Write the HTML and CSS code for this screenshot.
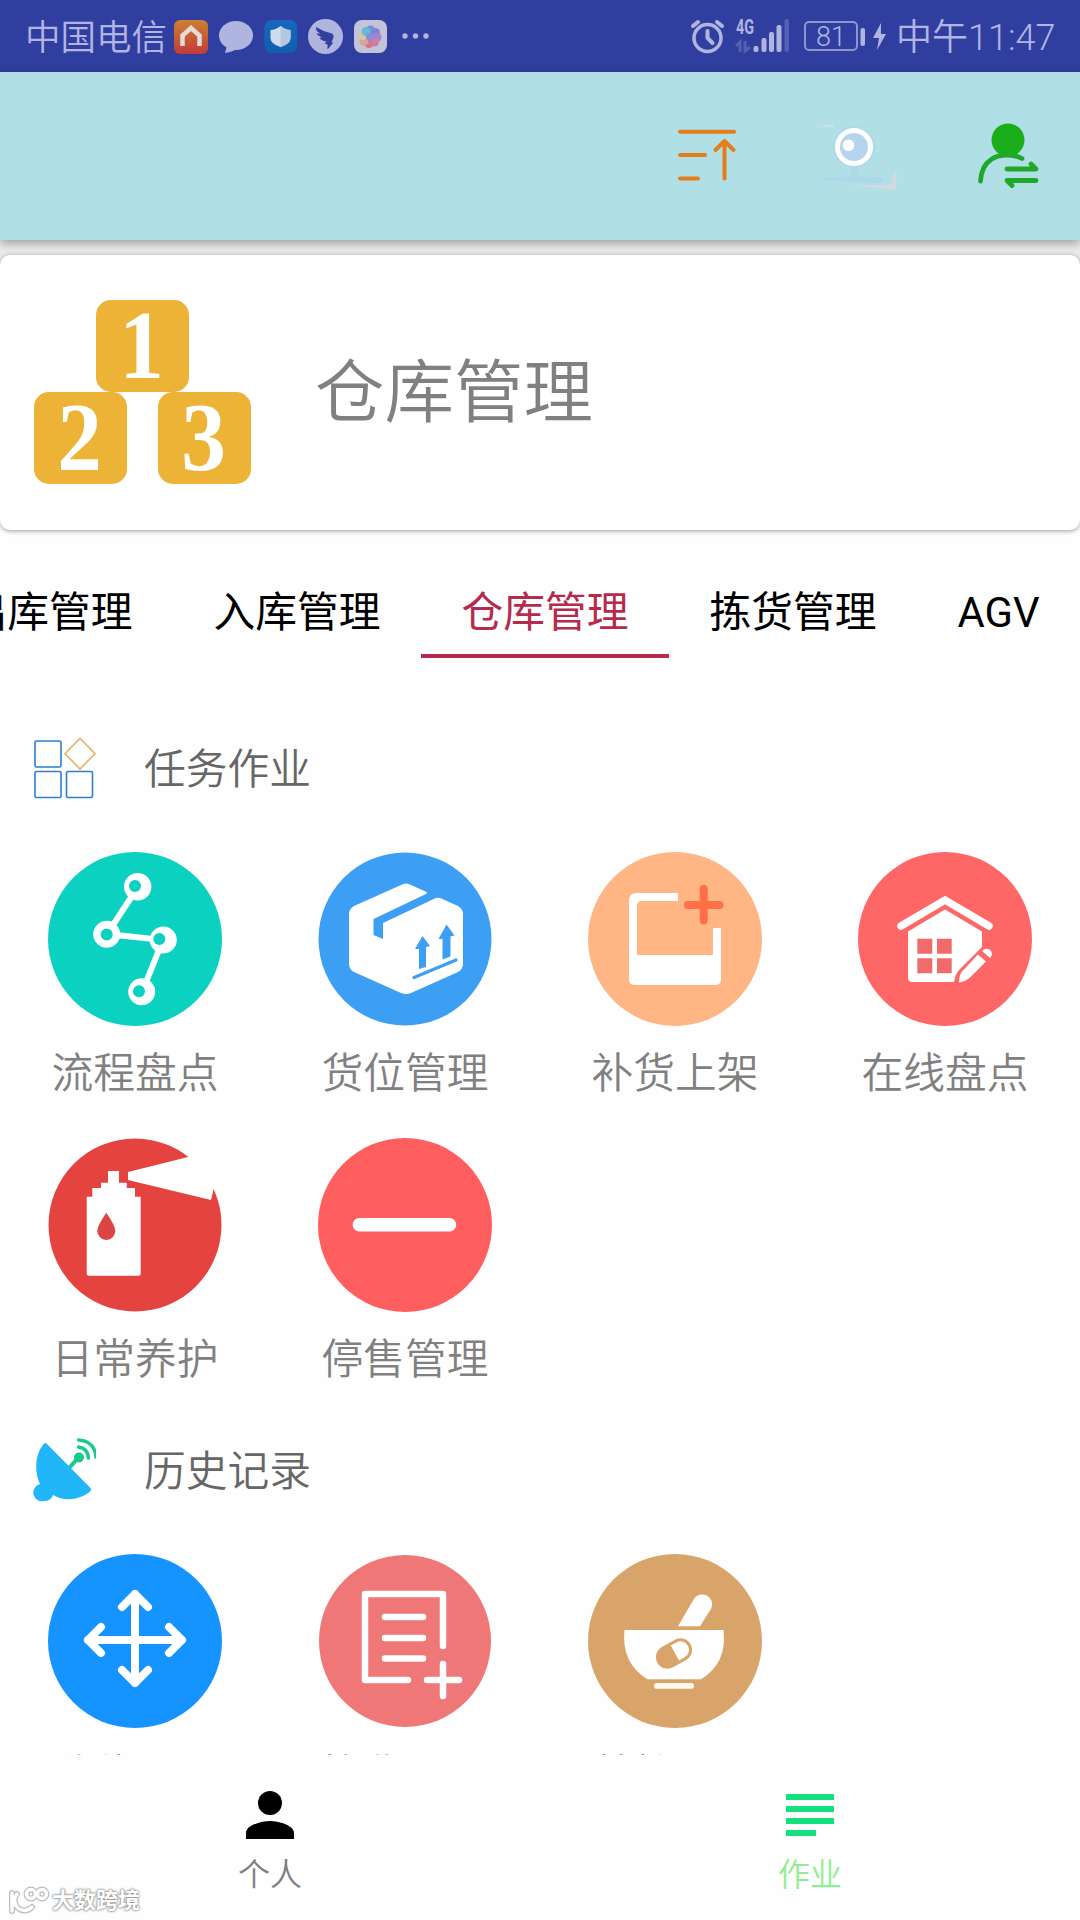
FILE: index.html
```html
<!DOCTYPE html>
<html lang="zh-CN">
<head>
<meta charset="utf-8">
<title>仓库管理</title>
<link rel="stylesheet" href="styles.css">
</head>
<body>
<div class="screen">
  <div class="status">
    <span class="carrier">中国电信</span>
    <svg class="status-apps" width="260" height="72" viewBox="172 0 260 72">
      <defs>
        <linearGradient id="home" x1="0" y1="0" x2="0" y2="1"><stop offset="0" stop-color="#cc8035"/><stop offset="1" stop-color="#c23c36"/></linearGradient>
        <linearGradient id="shield" x1="0" y1="0" x2="0" y2="1"><stop offset="0" stop-color="#1768bc"/><stop offset="1" stop-color="#0d5fae"/></linearGradient>
      </defs>
      <rect x="174" y="20" width="34" height="34" rx="6" fill="url(#home)"/>
      <path d="M182.500 46V35.500L191 28l8.500 7.500V46" fill="none" stroke="#e4dcda" stroke-width="4.500"/>
      <ellipse cx="236" cy="35.500" rx="17" ry="14.500" fill="#b0b5e0"/><path d="M227 46l-2 7q8-1 13-5z" fill="#b0b5e0"/>
      <rect x="264.500" y="20" width="32.500" height="33" rx="7" fill="url(#shield)"/>
      <path d="M280.500 26q5 4 10 4v8q0 6-10 9-10-3-10-9v-8q5 0 10-4z" fill="#cfdcef"/><path d="M280.500 26q5 4 10 4v8q0 6-10 9z" fill="#b4c7e2"/>
      <circle cx="325.500" cy="36.500" r="17.500" fill="#b0b5e0"/>
      <path d="M316 27q8 5 16 6.500 2 1 1.500 4l-2 5h2l-6 7v-5l-3-1 2-2q-6-1-7-4l3 0q-5-2-6-4l4 0q-5-2-4.500-6.500z" fill="#333f9e"/>
      <rect x="354" y="20" width="33" height="33" rx="8" fill="#c3c4da"/>
      <g opacity=".82">
        <circle cx="370.500" cy="30" r="4.500" fill="#638ad8"/><circle cx="375.500" cy="32.500" r="4.500" fill="#6e78dc"/><circle cx="377" cy="37.500" r="4.500" fill="#a175cf"/><circle cx="374.500" cy="42" r="4.500" fill="#ca719e"/><circle cx="369" cy="43.500" r="4.500" fill="#db6677"/><circle cx="364" cy="41" r="4.500" fill="#dca08b"/><circle cx="363" cy="35.500" r="4.500" fill="#d8c79d"/><circle cx="366" cy="31.500" r="4.500" fill="#56b6d4"/><circle cx="370" cy="37" r="4" fill="#7f82d8"/>
      </g>
      <g fill="#b0b5e0"><circle cx="405" cy="36" r="2.700"/><circle cx="415.500" cy="36" r="2.700"/><circle cx="426" cy="36" r="2.700"/></g>
    </svg>
    <svg class="status-signal" width="104" height="72" viewBox="688 0 104 72">
      <g fill="none" stroke="#b0b5e0" stroke-linecap="round"><circle cx="707.500" cy="38" r="13.500" stroke-width="3.500"/><path d="M707.500 31v7l5 5" stroke-width="4"/><path d="M693 26l5-4M722 26l-5-4" stroke-width="4"/></g>
      <text class="net" x="736" y="34" textLength="18" lengthAdjust="spacingAndGlyphs">4G</text>
      <path d="M736 46l4-4v10M745 41v10l5-4" fill="none" stroke="#5560b0" stroke-width="3"/>
      <g fill="#b0b5e0"><rect x="753.500" y="46" width="5" height="6" rx="2"/><rect x="761.500" y="38" width="5" height="14" rx="2"/><rect x="769" y="32" width="5" height="20" rx="2"/><rect x="776.500" y="25" width="5" height="27" rx="2"/></g>
      <rect x="784.500" y="19" width="4.500" height="33" rx="2" fill="#5560b2"/>
    </svg>
    <span class="battery">81</span>
    <svg class="status-charge" width="28" height="72" viewBox="860 0 28 72"><rect x="860.500" y="28" width="4.500" height="18" rx="2" fill="#b0b5e0"/><path d="M881 23l-8 15h6l-2 12 9-16h-5z" fill="#b0b5e0"/></svg>
    <span class="clock">中午11:47</span>
  </div>

  <header class="appbar">
    <svg width="64" height="72" viewBox="674 120 64 72"><path d="M680 131.700h54M680 155h25M680 178.500h18M724.500 178.500v-37M715.500 150l9-9 9 9" fill="none" stroke="#e47d1c" stroke-width="4" stroke-linecap="round" stroke-linejoin="round"/></svg>
    <svg width="84" height="72" viewBox="815 120 84 72">
      <path d="M852 185l36 0 5-13h3l1 5-2 13z" fill="#d2d9df"/><path d="M848 170h30l17 0-4 14h-33z" fill="#b0e0e6"/><path d="M818 126.500l13-2q5 1 2 2z" fill="#d6e2e6"/>
      <path d="M851 164h6v13h24q4 2 1 6l-56-2q-3-2 0-4h25z" fill="#afd7ec"/>
      <circle cx="854" cy="147" r="21" fill="#add9e9"/><circle cx="854" cy="147" r="16.500" fill="#b7d4ee" stroke="#fff" stroke-width="5"/><circle cx="848.500" cy="145.300" r="5.800" fill="#fff"/>
    </svg>
    <svg width="64" height="72" viewBox="976 120 64 72"><circle cx="1008" cy="140" r="16.500" fill="#1aae1a"/><path d="M980.500 181q1-15 10-21 6-5 17-5 8 0 14.500 3.500M1007 169h29l-5-5M1036 180.500h-29l5 5" fill="none" stroke="#20a82a" stroke-width="4.800" stroke-linecap="round" stroke-linejoin="round"/></svg>
  </header>

  <div class="banner">
    <section class="card">
      <div class="blocks"><b class="block top"><span>1</span></b><b class="block"><span>2</span></b><b class="block"><span>3</span></b></div>
      <h1 class="card-title">仓库管理</h1>
    </section>
  </div>

  <nav class="tabs">
    <a class="tab">出库管理</a><a class="tab">入库管理</a><a class="tab active">仓库管理</a><a class="tab">拣货管理</a><a class="tab">AGV</a>
  </nav>

  <main class="content">
    <h2 class="section">
      <svg width="64" height="64" viewBox="32 736 64 64"><g fill="none" stroke-width="1.600"><g stroke="#2a7fd0"><rect x="35" y="741" width="26" height="26" rx="1.500"/><rect x="35" y="771.500" width="26" height="26" rx="1.500"/><rect x="66.500" y="771.500" width="26" height="26" rx="1.500"/></g><path d="M80 738.500L95 753.700 80 769 65 753.700z" stroke="#dcb662"/></g></svg>
      <span>任务作业</span>
    </h2>
    <div class="grid">
      <div class="item">
        <svg class="icon" viewBox="0 0 174 174"><circle cx="87" cy="87" r="87" fill="#0bd1c0"/><path d="M90 35L59 82l56 6-21 52" fill="none" stroke="#fff" stroke-width="6"/><g fill="#fff"><circle cx="89.700" cy="34.700" r="13.700"/><circle cx="58.700" cy="82.300" r="13.500"/><circle cx="115.300" cy="88" r="13.500"/><circle cx="93.700" cy="139.700" r="13.500"/></g><g fill="#0bd1c0"><circle cx="87" cy="34" r="6"/><circle cx="58.700" cy="82.500" r="6"/><circle cx="111.300" cy="87" r="6"/><circle cx="91" cy="139.300" r="6"/></g></svg>
        <span>流程盘点</span>
      </div>
      <div class="item">
        <svg class="icon" viewBox="0 0 174 174"><circle cx="87" cy="87" r="86.500" fill="#3d9ff4"/><path d="M83 33q5-3 10 0l47 21q5 3 5 8v50q0 5-5 8l-47 21q-5 2-10 0l-47-21q-5-3-5-8V62q0-5 5-8z" fill="#fff"/><path d="M110 41l10 4L65 71v16l-9.500-4V67z" fill="#3d9ff4"/><path d="M108 38l17 7-5 1-11-4z" fill="#3d9ff4"/><path d="M101 117V97h-4l7.500-13 7.500 10-4 1v20zM124.500 107.500V87h-4l8-14.500 8 11-4 1v20z" fill="#3d9ff4"/><path d="M96 125.500l42-17.500" stroke="#3d9ff4" stroke-width="3.200" stroke-linecap="round"/></svg>
        <span>货位管理</span>
      </div>
      <div class="item">
        <svg class="icon" viewBox="0 0 174 174"><circle cx="87" cy="87" r="87" fill="#ffb684"/><path d="M90 41v8H54q-5 0-5 5v49h76V76h8v51q0 6-6 6H47q-6 0-6-6V49q0-8 8-8z" fill="#fff"/><path d="M100 53h31.500M115.700 37v31.500" stroke="#ff7048" stroke-width="8" stroke-linecap="round"/></svg>
        <span>补货上架</span>
      </div>
      <div class="item">
        <svg class="icon" viewBox="0 0 174 174"><circle cx="87" cy="87" r="87" fill="#ff6767"/><path d="M43 74l44-26 44 26" fill="none" stroke="#fff" stroke-width="7.500" stroke-linecap="round"/><path d="M50 79.500l37-22 37 22V95l-22 22q-5 5-6 13H54q-4 0-4-4z" fill="#fff"/><path d="M59.300 86.700h15v15h-15zM79 86.700h14.700v15H79zM59.300 106.300h15v15h-15zM79 106.300h14.700v15H79z" fill="#f26b6b"/><path d="M120 102.500l8 7-15 15q-5 5-12 6 0-7 3-11z" fill="#fff"/><path d="M124 99q4-4 8-1 4 3 0 8z" fill="#fff"/></svg>
        <span>在线盘点</span>
      </div>
      <div class="item">
        <svg class="icon" viewBox="0 0 174 174"><circle cx="87" cy="87" r="86.500" fill="#e54340"/><path d="M80 34l60-15 34-12v44h-8.300L163 62 80 42zM60 33h11v11.700h7.700V50H87v8.700h5.700v77q0 2-2 2h-50q-2 0-2-2v-77h5.600V50H53v-5.300h7z" fill="#fefefe"/><path d="M58.300 74.700q9 13 9 18.300a9 9 0 0 1-18 0q0-5.300 9-18.300z" fill="#dc4543"/></svg>
        <span>日常养护</span>
      </div>
      <div class="item">
        <svg class="icon" viewBox="0 0 174 174"><circle cx="87" cy="87" r="87" fill="#ff5e5e"/><rect x="34.700" y="80" width="103.500" height="13.500" rx="6.500" fill="#fff"/></svg>
        <span>停售管理</span>
      </div>
    </div>

    <h2 class="section second">
      <svg width="64" height="64" viewBox="31 1438 64 64"><g fill="none" stroke="#18c98f" stroke-width="3.400" stroke-linecap="round"><path d="M69 1467l8-9" stroke-width="4"/><path d="M79 1447q9 1 10 11M79 1440q16 1 17.500 17" transform="translate(-1.500)"/></g><circle cx="78" cy="1457.500" r="5" fill="#18c98f"/><path d="M43 1443.500q1-1 2.500 0L89.500 1488q1 2 0 3c-10 9-26 11-37.500 4q-2 6-9 6a8.500 8.500 0 0 1-4-17c-6-12-5-30 4-40.500z" fill="#20b6f8"/></svg>
      <span>历史记录</span>
    </h2>
    <div class="grid">
      <div class="item">
        <svg class="icon" viewBox="0 0 174 174"><circle cx="87" cy="87" r="87" fill="#1594ff"/><path d="M40 86h94M87 40v89M74 53l13-13 13 13M74 116l13 13 13-13M53 73L40 86l13 13M121 73l13 13-13 13" fill="none" stroke="#fff" stroke-width="8" stroke-linecap="round" stroke-linejoin="round"/></svg>
        <span>移位记录</span>
      </div>
      <div class="item">
        <svg class="icon" viewBox="0 0 174 174"><circle cx="87" cy="87" r="86" fill="#f07777"/><path d="M90 126H47V40h78v52M67 63h38M67 84h38M67 104.500h38M109 126h32M125 110v32" fill="none" stroke="#fff" stroke-width="6.500" stroke-linecap="round" stroke-linejoin="round"/></svg>
        <span>拣货记录</span>
      </div>
      <div class="item">
        <svg class="icon" viewBox="0 0 174 174"><circle cx="87" cy="87" r="87" fill="#d8a46a"/><path d="M36.500 76h99q4 33-22.500 49.300H59.500Q33 109 36.500 76z" fill="#fff"/><rect x="66" y="129" width="40" height="5.800" rx="2.900" fill="#fffaf0"/><path d="M90 72.300L106.500 44a10 10 0 0 1 17 10L112 72.300z" fill="#fff"/><g transform="rotate(-29 86 99.500)"><rect x="67" y="88" width="38" height="23" rx="11.500" fill="#d8a46a"/><path d="M87 91h6.500a8.500 8.500 0 0 1 0 17H87z" fill="#fff"/></g></svg>
        <span>养护记录</span>
      </div>
    </div>
  </main>

  <footer class="bottom">
    <a class="dest"><svg width="48" height="48" viewBox="0 0 48 48"><circle cx="24" cy="12" r="12"/><path d="M0 48v-6c0-8 16-12 24-12s24 4 24 12v6z"/></svg>个人</a>
    <a class="dest active"><svg width="48" height="48" viewBox="0 0 48 48"><path d="M0 3h48v6H0zM0 15h48v6H0zM0 27h48v6H0zM0 39h30v6H0z"/></svg>作业</a>
    <div class="mark"><svg width="42" height="30" viewBox="8 1884 42 30"><g fill="none" stroke-linecap="round"><g stroke="#bdbdbd" stroke-width="6"><path d="M12 1909v-18M17 1892a9 9 0 1 0 15 13"/><circle cx="31" cy="1892" r="4.500"/><circle cx="42" cy="1892" r="4.500"/></g><g stroke="#fff" stroke-width="3.500"><path d="M12 1909v-18M17 1892a9 9 0 1 0 15 13"/><circle cx="31" cy="1892" r="4.500"/><circle cx="42" cy="1892" r="4.500"/></g></g></svg><span>大数跨境</span></div>
  </footer>
</div>
</body>
</html>
```
FILE: styles.css
```css
* { box-sizing: border-box; }
body { margin: 0; }
.screen {
  width: 1080px; height: 1920px; overflow: hidden;
  display: flex; flex-direction: column;
  background: #fefefe; color: #808080;
  font-family: Roboto, "Noto Sans CJK SC", sans-serif; font-weight: 350;
}
svg { display: block; flex: none; }

.status { height: 72px; flex: none; display: flex; align-items: center; padding: 0 24px 0 25px; background: #303f9f; color: #b0b5e6; }
.carrier { width: 147px; padding-top: 4px; font-size: 35.5px; line-height: 50px; white-space: nowrap; }
.status-signal { margin-left: 256px; }
.net { font: 700 20px Roboto, sans-serif; fill: #b0b5e0; }
.battery { width: 54px; height: 30px; margin-left: 12px; border: 2px solid #8d95d0; border-radius: 5px; font-size: 27px; line-height: 28px; text-align: center; }
.status-charge { margin-left: 2px; }
.clock { margin-left: 8px; padding-top: 4px; font-size: 36px; line-height: 50px; white-space: nowrap; }

.appbar { position: relative; height: 168px; flex: none; display: flex; align-items: flex-start; justify-content: flex-end; gap: 77px; padding: 48px 40px 0 0; background: #b0e0e6; box-shadow: 0 3px 10px rgba(0,0,0,.36); }

.banner { flex: none; padding-top: 15px; background: linear-gradient(#ececec 24px, #fefefe 24px); }
.card { height: 275px; display: flex; align-items: center; padding-left: 34px; background: #fff; border-radius: 10px; box-shadow: 0 1px 5px rgba(0,0,0,.4); }
.blocks { width: 217px; margin-bottom: 2px; display: grid; grid-template-columns: 93px 93px; justify-content: space-between; }
.block { width: 93px; height: 92px; border-radius: 15px; background: #ecb337; color: #fff; font: 700 97px/92px "Liberation Serif", serif; text-align: center; }
.block span { display: block; margin-left: -2px; transform: scaleX(.92); }
.block.top { grid-column: 1 / 3; justify-self: center; }
.card-title { margin: 3px 0 0 64px; font-size: 69.5px; line-height: 90px; font-weight: 350; }

.tabs { flex: none; height: 128px; display: flex; margin-left: -75px; white-space: nowrap; color: #000; font-size: 41.75px; font-weight: 400; }
.tab { height: 128px; padding: 51px 40.5px 0; line-height: 64px; }
.tab.active { color: #b42b4c; border-bottom: 4px solid #b42b4c; }

.content { flex: 1; min-height: 0; overflow: hidden; padding-top: 78px; }
.section { display: flex; align-items: center; gap: 48px; height: 64px; margin: 0; padding-left: 32px; font-size: 41.75px; font-weight: 350; color: #666; }
.section span { padding-bottom: 5px; }
.grid { display: grid; grid-template-columns: repeat(4, 270px); grid-auto-rows: 286px; padding-top: 52px; }
.item { display: flex; flex-direction: column; align-items: center; font-size: 41.75px; line-height: 60px; white-space: nowrap; }
.icon { width: 174px; height: 174px; margin-bottom: 17.5px; }
.second { margin-top: 14px; }

.bottom { position: relative; flex: none; height: 165px; display: flex; background: #fefefe; }
.dest { flex: 1; display: flex; flex-direction: column; align-items: center; padding-top: 36px; font-size: 32px; line-height: 46px; gap: 13px; }
.dest svg { fill: #000; }
.dest.active { color: #90ee90; }
.dest.active svg { fill: #14df7d; }
.mark { position: absolute; left: 8px; bottom: 4px; display: flex; align-items: center; gap: 2px; color: #fff; font-size: 22px; line-height: 30px; font-weight: 700; text-shadow: 0 0 2px #888, 0 0 2px #999, 0 0 3px #aaa; }
```
